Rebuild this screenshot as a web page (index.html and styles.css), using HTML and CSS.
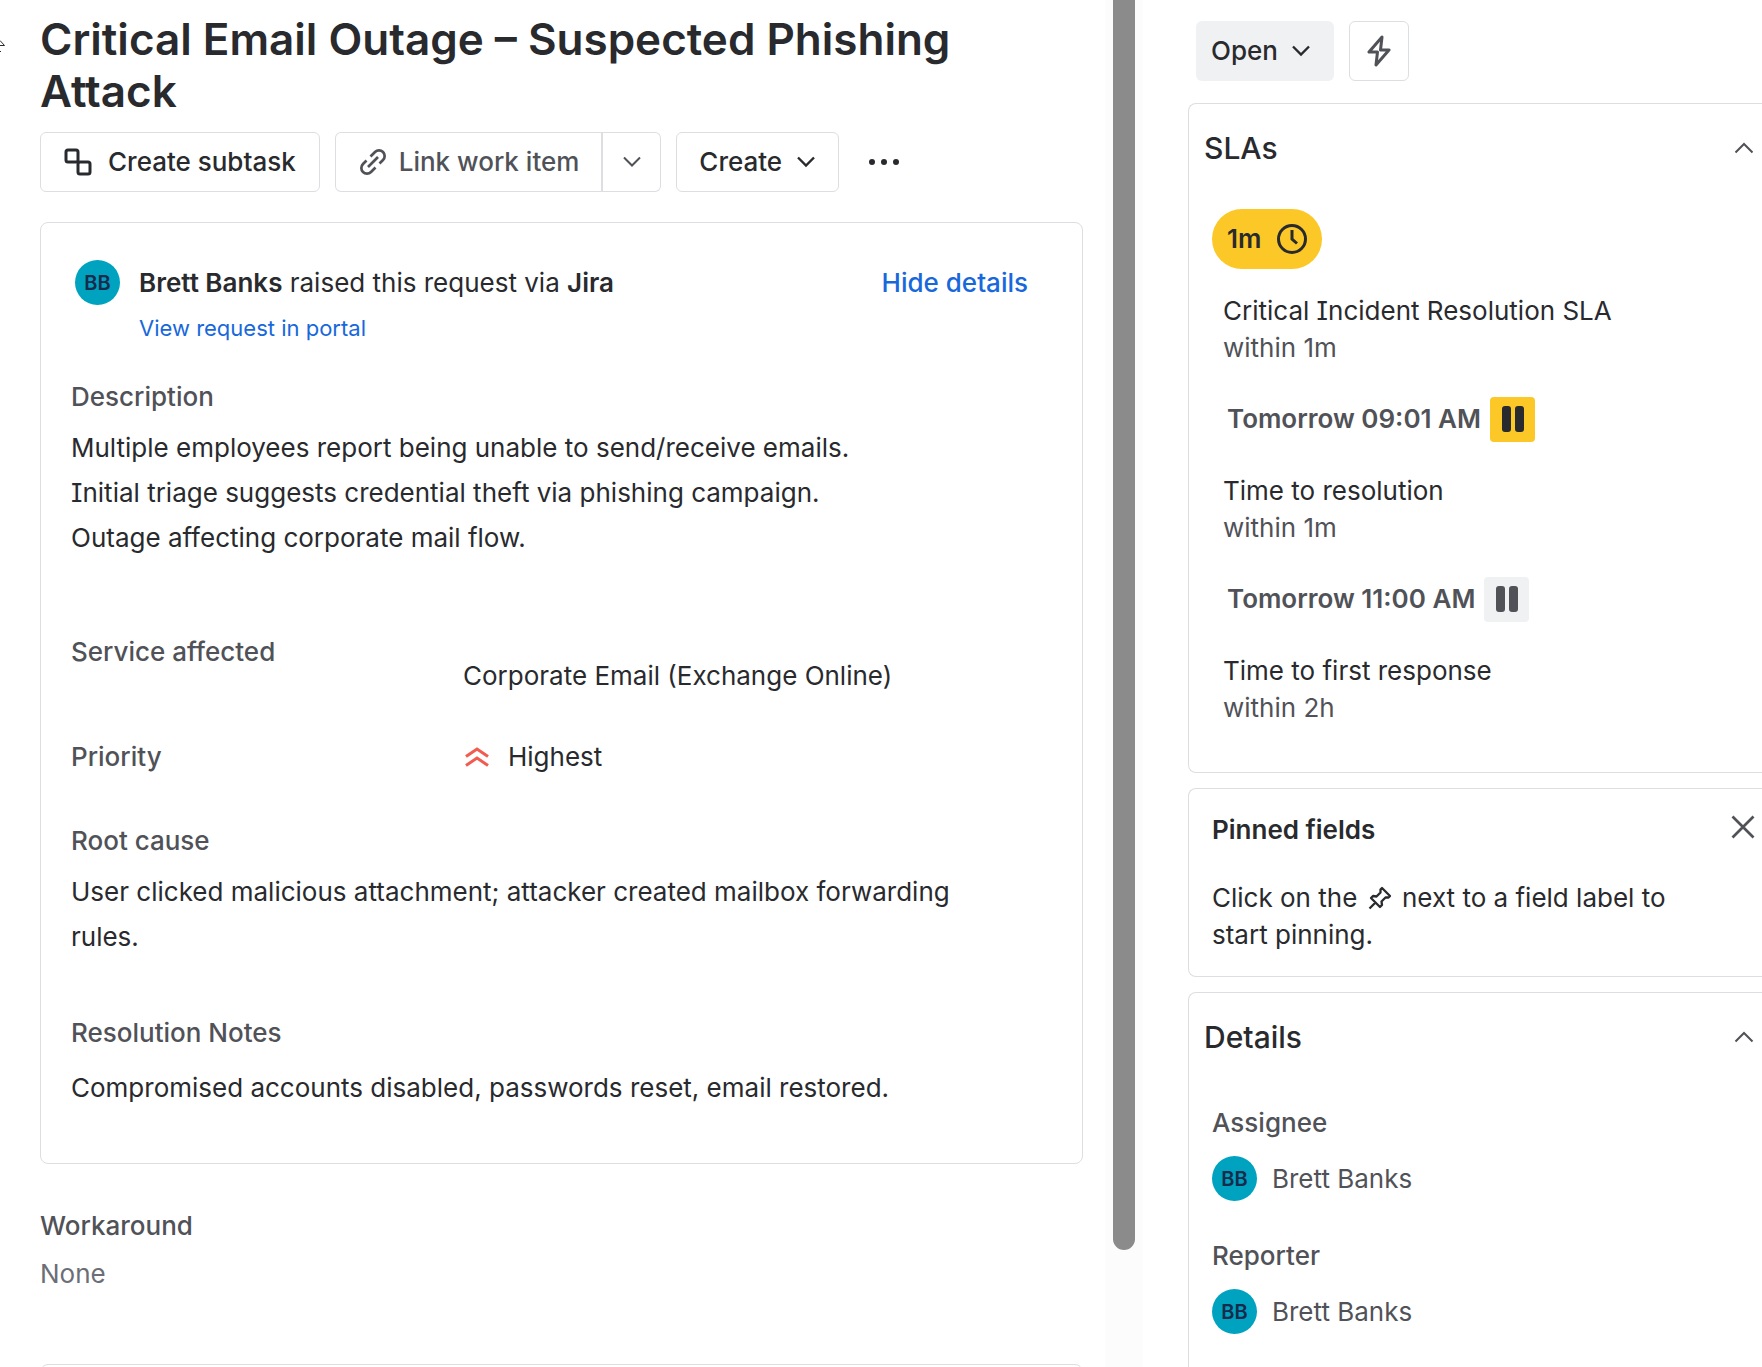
FILE: index.html
```html
<!DOCTYPE html>
<html lang="en">
<head>
<meta charset="utf-8">
<meta name="viewport" content="width=device-width, initial-scale=1">
<title>Critical Email Outage – Suspected Phishing Attack</title>
<link rel="stylesheet" href="styles.css">
</head>
<body>
<div class="shell">
  <svg class="resize-hint" width="6" height="18" viewBox="0 0 6 18" fill="none" stroke="#292a2e" stroke-width="1" aria-hidden="true"><path d="M0 4.500 4.500 9.500H0M0 15.500h1"/></svg>
  <main class="issue">
    <h1 class="issue-title">Critical Email Outage – Suspected Phishing Attack</h1>
    <div class="toolbar">
      <button class="btn btn-subtask" type="button">
        <svg width="28" height="28" viewBox="0 0 28 28" fill="none" stroke="currentColor" stroke-width="3" aria-hidden="true"><rect x="2" y="2" width="12" height="12" rx="2"/><rect x="14" y="14" width="12" height="12" rx="2"/></svg>
        Create subtask
      </button>
      <div class="split">
        <button class="btn btn-link" type="button">
          <svg width="28" height="28" viewBox="0 0 28 28" fill="none" stroke="currentColor" stroke-width="2.700" aria-hidden="true"><path d="M11.500 8.500 16 4A5.600 5.600 0 0 1 24 12L20.500 15.500M16.500 19.500 12 24A5.600 5.600 0 0 1 4 16L7.500 12.500M9 19 19 9"/></svg>
          Link work item
        </button>
        <button class="btn btn-more-links" type="button" aria-label="More link options">
          <svg width="20" height="12" viewBox="0 0 20 12" fill="none" stroke="currentColor" stroke-width="2" aria-hidden="true"><path d="M2 1.500l8 8 8-8"/></svg>
        </button>
      </div>
      <button class="btn btn-create" type="button">
        Create
        <svg width="20" height="12" viewBox="0 0 20 12" fill="none" stroke="currentColor" stroke-width="2.400" aria-hidden="true"><path d="M2 1.500l8 8 8-8"/></svg>
      </button>
      <button class="btn-dots" type="button" aria-label="More actions">
        <svg width="32" height="8" viewBox="0 0 32 8" fill="currentColor" aria-hidden="true"><circle cx="4" cy="4" r="3"/><circle cx="16" cy="4" r="3"/><circle cx="28" cy="4" r="3"/></svg>
      </button>
    </div>

    <section class="card request">
      <header class="request-head">
        <span class="avatar" aria-hidden="true">BB</span>
        <div class="request-by">
          <p class="request-line"><strong>Brett Banks</strong> raised this request via <strong>Jira</strong></p>
          <a class="portal-link" href="#">View request in portal</a>
        </div>
        <a class="hide-link" href="#">Hide details</a>
      </header>
      <div class="field field-description">
        <h2 class="label">Description</h2>
        <p class="prose">Multiple employees report being unable to send/receive emails.<br>Initial triage suggests credential theft via phishing campaign.<br>Outage affecting corporate mail flow.</p>
      </div>
      <div class="row row-service">
        <h2 class="label">Service affected</h2>
        <p class="value">Corporate Email (Exchange Online)</p>
      </div>
      <div class="row row-priority">
        <h2 class="label">Priority</h2>
        <p class="value priority">
          <svg width="28" height="28" viewBox="0 0 28 28" fill="none" stroke="#F15B50" stroke-width="3" aria-hidden="true"><path d="M3 13.500 14 6l11 7.500M3 22.500 14 15l11 7.500"/></svg>
          Highest
        </p>
      </div>
      <div class="field field-cause">
        <h2 class="label">Root cause</h2>
        <p class="prose">User clicked malicious attachment; attacker created mailbox forwarding rules.</p>
      </div>
      <div class="field field-notes">
        <h2 class="label">Resolution Notes</h2>
        <p class="prose">Compromised accounts disabled, passwords reset, email restored.</p>
      </div>
    </section>

    <section class="workaround">
      <h2 class="label">Workaround</h2>
      <p class="empty">None</p>
    </section>
    <section class="card next-card"></section>
  </main>

  <div class="track" aria-hidden="true"><div class="thumb"></div></div>

  <aside class="side">
    <div class="status-bar">
      <button class="btn-status" type="button">
        Open
        <svg width="20" height="12" viewBox="0 0 20 12" fill="none" stroke="currentColor" stroke-width="2.400" aria-hidden="true"><path d="M2 1.500l8 8 8-8"/></svg>
      </button>
      <button class="btn btn-bolt" type="button" aria-label="Automation">
        <svg width="24" height="32" viewBox="0 0 24 32" fill="none" stroke="currentColor" stroke-width="3" stroke-linejoin="round" aria-hidden="true"><path d="M15 2 2 17h8.500L9 30 22 15h-8.500z"/></svg>
      </button>
    </div>

    <section class="panel panel-sla">
      <header class="panel-head">
        <h2 class="panel-title">SLAs</h2>
        <button class="btn-fold" type="button" aria-label="Collapse SLAs"><svg width="20" height="12" viewBox="0 0 20 12" fill="none" stroke="currentColor" stroke-width="2" aria-hidden="true"><path d="M1.500 10.500 10 2l8.500 8.500"/></svg></button>
      </header>
      <ul class="sla-list">
        <li class="sla">
          <div class="sla-clock"><span class="pill">1m <svg width="32" height="32" viewBox="0 0 32 32" fill="none" stroke="currentColor" stroke-width="3" aria-hidden="true"><circle cx="16" cy="16" r="13.500"/><path d="M16 7v9l5 4.500"/></svg></span></div>
          <p class="sla-name">Critical Incident Resolution SLA</p>
          <p class="sla-goal">within 1m</p>
        </li>
        <li class="sla">
          <div class="sla-clock sla-date">Tomorrow 09:01 AM <span class="pause pause-warn"></span></div>
          <p class="sla-name">Time to resolution</p>
          <p class="sla-goal">within 1m</p>
        </li>
        <li class="sla">
          <div class="sla-clock sla-date">Tomorrow 11:00 AM <span class="pause"></span></div>
          <p class="sla-name">Time to first response</p>
          <p class="sla-goal">within 2h</p>
        </li>
      </ul>
    </section>

    <section class="panel panel-pinned">
      <header class="pinned-head">
        <h2 class="pinned-title">Pinned fields</h2>
        <button class="btn-fold btn-dismiss" type="button" aria-label="Dismiss"><svg width="24" height="24" viewBox="0 0 24 24" fill="none" stroke="currentColor" stroke-width="2.700" aria-hidden="true"><path d="M1.500 1.500l21 21M22.500 1.500l-21 21"/></svg></button>
      </header>
      <p class="pinned-text"><span>Click on the</span> <svg class="pin" width="24" height="24" viewBox="0 0 24 24" fill="none" stroke="currentColor" stroke-width="2.300" stroke-linejoin="round" aria-hidden="true"><path d="M14 2l8 8-1.500 1.500h-3L13.500 15.500l.5 3.500-2 2L3 12l2-2 3.500.5L12.500 6.500v-3zM7.500 16.500 1.500 22.500"/></svg> <span>next to a field label to</span> <span>start pinning.</span></p>
    </section>

    <section class="panel panel-details">
      <header class="panel-head">
        <h2 class="panel-title">Details</h2>
        <button class="btn-fold" type="button" aria-label="Collapse details"><svg width="20" height="12" viewBox="0 0 20 12" fill="none" stroke="currentColor" stroke-width="2" aria-hidden="true"><path d="M1.500 10.500 10 2l8.500 8.500"/></svg></button>
      </header>
      <dl class="people">
        <div class="person">
          <dt class="label">Assignee</dt>
          <dd class="person-name"><span class="avatar" aria-hidden="true">BB</span>Brett Banks</dd>
        </div>
        <div class="person">
          <dt class="label">Reporter</dt>
          <dd class="person-name"><span class="avatar" aria-hidden="true">BB</span>Brett Banks</dd>
        </div>
      </dl>
    </section>
  </aside>
</div>
</body>
</html>
```
FILE: styles.css
```css
:root {
  --text: #292a2e;
  --subtle: #505258;
  --faint: #6b6e76;
  --line: #dddee1;
  --link: #1868db;
  --warn: #fbc828;
}

* { box-sizing: border-box; }

body {
  margin: 0;
  background: #fff;
  color: var(--text);
  font: 400 26px/38px Inter, "Liberation Sans", sans-serif;
  font-feature-settings: "cv08";
}

h1, h2, p, ul, dl, dd { margin: 0; padding: 0; }
ul { list-style: none; }
a { text-decoration: none; color: var(--link); }
button { font: inherit; font-feature-settings: inherit; color: inherit; margin: 0; padding: 0; border: 0; background: none; }
svg { flex: none; display: block; }

.shell {
  position: relative;
  display: grid;
  grid-template-columns: minmax(0, 1105fr) 38px minmax(0, 619fr);
  height: 100vh;
  overflow: hidden;
}

.resize-hint { position: absolute; left: 0; top: 36px; }

/* Issue column */
.issue { padding: 13px 22px 0 40px; }
.issue-title { font-size: 44px; line-height: 52px; font-weight: 600; }

.toolbar { display: flex; margin-top: 15px; }
.btn, .btn-status {
  display: flex;
  align-items: center;
  height: 60px;
  border: 1px solid var(--line);
  border-radius: 6px;
  background: #fff;
  font-weight: 500;
  white-space: nowrap;
}
.btn-subtask { padding: 0 23px; gap: 16px; }
.split { display: flex; margin-left: 15px; color: var(--subtle); }
.btn-link { padding: 0 22px 0 23px; gap: 12px; border-right-width: 2px; border-radius: 6px 0 0 6px; }
.btn-more-links { width: 58px; justify-content: center; border-left: 0; border-radius: 0 6px 6px 0; }
.btn-create { margin-left: 15px; padding: 0 22px; gap: 14px; }
.btn-dots { display: flex; align-items: center; justify-content: center; width: 60px; height: 60px; margin-left: 15px; }

.card { border: 1px solid var(--line); border-radius: 8px; }
.request { margin-top: 30px; padding: 37px 30px 53px; }
.request-head { display: flex; padding: 0 24px 0 4px; }
.avatar {
  display: flex;
  flex: none;
  align-items: center;
  justify-content: center;
  width: 45px;
  height: 45px;
  border-radius: 50%;
  background: #00a3bf;
  color: #172b4d;
  font-size: 20px;
  font-weight: 600;
}
.request-by { flex: 1; margin-left: 19px; }
.request-line { line-height: 45px; }
.request-line strong { font-weight: 600; }
.portal-link { display: block; font-size: 22px; line-height: 46px; }
.hide-link { line-height: 45px; font-weight: 500; }

.label { font-size: 26px; line-height: 38px; font-weight: 500; color: var(--subtle); }
.prose { line-height: 45px; padding-right: 40px; }
.field-description { margin-top: 27px; }
.field-description .prose, .field-cause .prose { margin-top: 9px; }
.row { display: grid; grid-template-columns: 392px 1fr; }
.row-service { margin-top: 73px; }
.row-service .value { padding-top: 24px; }
.row-priority { margin-top: 43px; }
.priority { display: flex; align-items: center; gap: 17px; }
.field-cause { margin-top: 46px; }
.field-notes { margin-top: 55px; }
.field-notes .prose { margin-top: 13px; }

.workaround { margin-top: 43px; }
.empty { margin-top: 10px; color: var(--faint); }
.next-card { margin-top: 71px; height: 60px; }

/* Scrollbar between the columns */
.track { background: #fcfcfc; padding: 0 8px; }
.thumb { height: 1250px; border-radius: 0 0 11px 11px; background: #8b8b8b; }

/* Side column */
.side { padding-left: 45px; }
.status-bar { display: flex; gap: 15px; padding: 21px 8px 22px; }
.btn-status { gap: 13px; padding: 0 23px 0 15px; border: 0; background: #f0f1f2; }
.btn-bolt { width: 60px; justify-content: center; color: var(--subtle); }

.panel { border: 1px solid var(--line); border-right: 0; border-radius: 8px 0 0 8px; margin-bottom: 15px; }
.panel-head { display: flex; align-items: center; justify-content: space-between; padding: 25px 8px 0 15px; }
.panel-title { font-size: 30px; line-height: 38px; font-weight: 500; }
.btn-fold { display: flex; align-items: center; color: var(--subtle); }

.sla-list { padding: 42px 23px 46px; }
.sla + .sla { margin-top: 23px; }
.sla-clock { display: flex; align-items: center; height: 60px; font-weight: 600; }
.sla-date { gap: 9px; padding-left: 15px; color: var(--subtle); }
.pill { display: flex; align-items: center; gap: 15px; height: 60px; padding: 0 14px 0 15px; border-radius: 30px; background: var(--warn); color: var(--text); }
.sla-name, .sla-goal { line-height: 37px; padding-left: 11px; }
.sla-name { margin-top: 23px; }
.sla-goal { color: var(--subtle); }
.pause { display: flex; align-items: center; justify-content: center; gap: 4px; width: 45px; height: 45px; border-radius: 4px; background: #f0f1f2; }
.pause::before, .pause::after { content: ""; width: 9px; height: 26px; border-radius: 3px; background: currentColor; }
.pause-warn { background: var(--warn); color: var(--text); }

.panel-pinned { padding: 22px 7px 23px 23px; }
.pinned-head { display: flex; align-items: flex-start; justify-content: space-between; }
.btn-dismiss { height: 32px; }
.pinned-title { font-size: 26px; line-height: 38px; font-weight: 600; }
.pinned-text { margin-top: 30px; max-width: 480px; line-height: 37px; }
.pin { display: inline-block; vertical-align: -3px; margin: 0 3px; }

.people { padding: 48px 23px; }
.person + .person { margin-top: 36px; }
.person-name { display: flex; align-items: center; gap: 15px; margin-top: 14px; color: var(--subtle); }
```
